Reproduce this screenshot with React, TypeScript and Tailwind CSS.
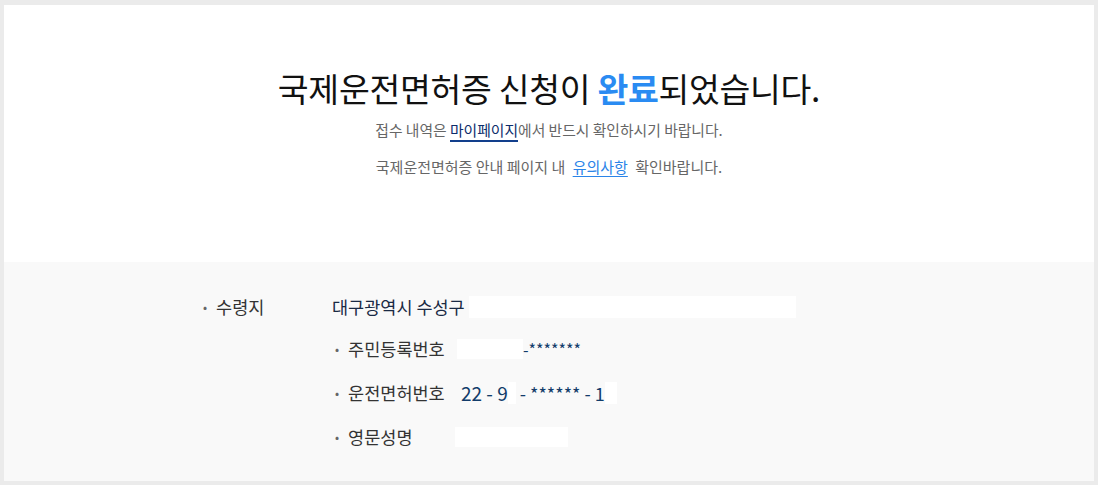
import React from "react";

const font = { fontFamily: '"Noto Sans CJK KR", "Noto Sans", sans-serif' };

function Redact({ className }: { className: string }) {
  return <span className={`inline-block bg-white align-middle ${className}`} />;
}

function Bullet({ children, className }: { children: React.ReactNode; className: string }) {
  return (
    <span className={`flex items-center ${className}`}>
      <span className="mr-[9px] text-[12px] text-[#666]">•</span>
      {children}
    </span>
  );
}

export default function App() {
  return (
    <div
      className="min-h-screen w-full bg-[#ebebeb] pt-[5px] pl-[4px] pr-[4px]"
      style={font}
    >
      <div className="w-[1090px] bg-white">
        {/* 완료 안내 */}
        <section className="h-[257px] flex flex-col items-center pt-[60px]">
          <h1 className="text-[33.5px] leading-[46px] text-[#111] tracking-[-0.3px]">
            국제운전면허증 신청이{" "}
            <span className="font-bold text-[#2a8bf2]">완료</span>되었습니다.
          </h1>
          <p className="mt-[9px] text-[14.8px] leading-[20px] text-[#666]">
            접수 내역은{" "}
            <span className="text-[#0c2d6b] border-b-2 border-[#123f8c]">마이페이지</span>
            에서 반드시 확인하시기 바랍니다.
          </p>
          <p className="mt-[17px] text-[15px] leading-[20px] text-[#666]">
            국제운전면허증 안내 페이지 내{" "}
            <span className="ml-[4px] mr-[4px] text-[#2b84e8] underline underline-offset-[3px]">
              유의사항
            </span>{" "}
            확인바랍니다.
          </p>
        </section>

        {/* 접수 정보 */}
        <section className="h-[219px] bg-[#f9f9f9] pt-[33px] pl-[199px] text-[17.5px] text-[#333]">
          <div className="flex h-[24px] items-center">
            <Bullet className="w-[129px]">수령지</Bullet>
            <span className="text-[#1a2a44]">대구광역시 수성구</span>
            <Redact className="ml-[4px] h-[22px] w-[327px]" />
          </div>
          <div className="pl-[132px]">
            <div className="mt-[18px] flex h-[24px] items-center">
              <Bullet className="w-[122px]">주민등록번호</Bullet>
              <Redact className="h-[20px] w-[66px]" />
              <span className="text-[16px] text-[#123c6a]">-*******</span>
            </div>
            <div className="mt-[20px] flex h-[24px] items-center">
              <Bullet className="w-[126px]">운전면허번호</Bullet>
              <span className="text-[#123c6a] text-[19px]">22 - 9</span>
              <Redact className="h-[22px] w-[8px]" />
              <span className="ml-[4px] text-[#123c6a] text-[18px]">- ****** - 1</span>
              <Redact className="h-[22px] w-[12px]" />
            </div>
            <div className="mt-[20px] flex h-[24px] items-center">
              <Bullet className="w-[120px]">영문성명</Bullet>
              <Redact className="h-[20px] w-[113px]" />
            </div>
          </div>
        </section>
      </div>
    </div>
  );
}
